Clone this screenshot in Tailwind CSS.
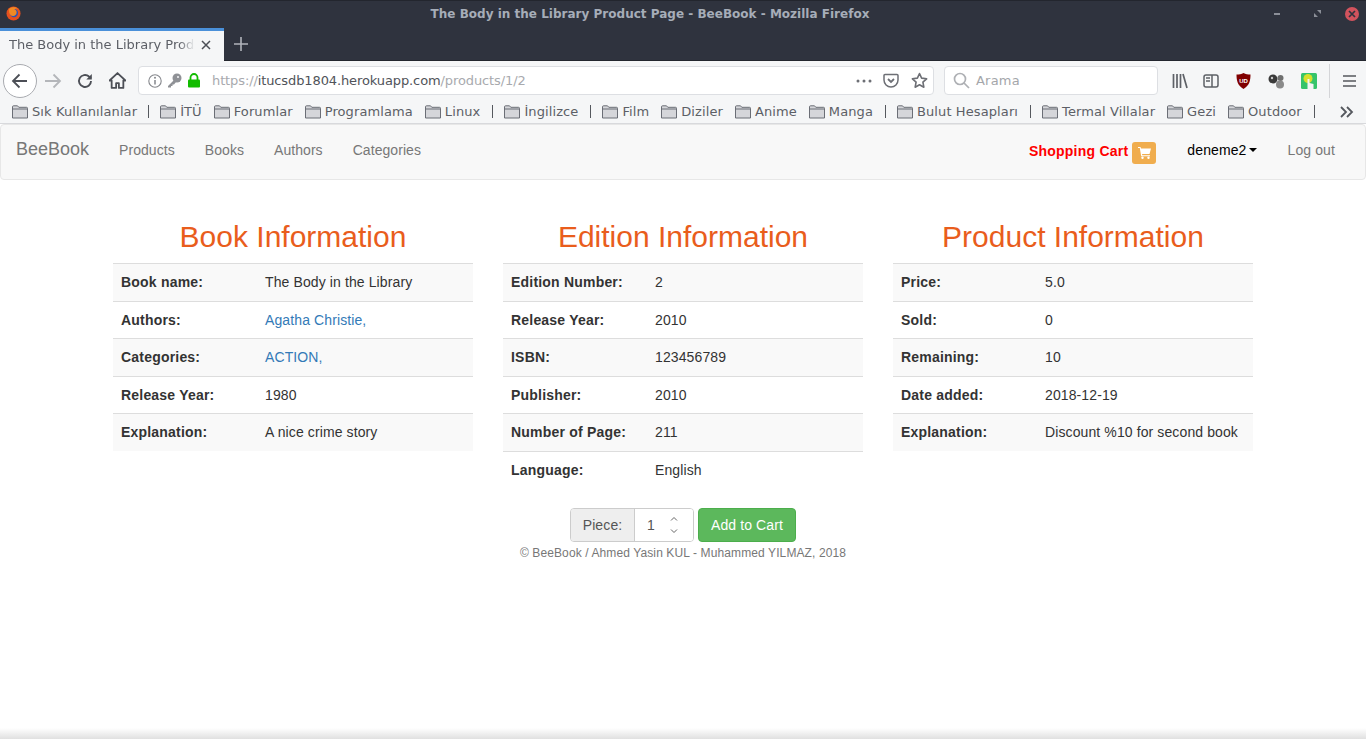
<!DOCTYPE html>
<html lang="en">
<head>
<meta charset="UTF-8">
<title>The Body in the Library Product Page - BeeBook</title>
<script src="https://cdn.jsdelivr.net/npm/@tailwindcss/browser@4"></script>
</head>
<body class="h-[739px] w-[1366px] overflow-hidden bg-white font-['Liberation_Sans',sans-serif]">
<svg width="0" height="0" class="absolute">
  <symbol id="folder" viewBox="0 0 16 16">
    <path d="M.5 14V2.800a1 1 0 0 1 1-1h4l1.300 1.500h7.700a1 1 0 0 1 1 1V14z" fill="#d5d6da" stroke="#6b6e76" stroke-width="1"/>
    <path d="M.5 5h15" stroke="#6b6e76" stroke-width="1" fill="none"/>
  </symbol>
</svg>

<!-- title bar -->
<div class="relative flex h-[28px] items-center border-t border-[#23262e] bg-[#2f333e] pb-[2px]">
  <svg class="ml-[6px] h-[15px] w-[15px]" viewBox="0 0 16 16">
    <circle cx="8" cy="8" r="7.500" fill="#e5501f"/>
    <circle cx="8.500" cy="7.500" r="4.400" fill="#2e55b5"/>
    <path d="M3 3.500C6 .5 11 1 13 3c-2-.6-3-.4-4 .4 2 .6 3 2.600 2 5-1 2-4 3-6 1.500C3.500 8.500 3 6 3 3.500z" fill="#f08a24"/>
  </svg>
  <div class="absolute inset-x-0 pr-[66px] text-center font-['DejaVu_Sans',sans-serif] text-[12px] font-bold tracking-[0.01px] text-[#a6adb8]">The Body in the Library Product Page - BeeBook - Mozilla Firefox</div>
  <div class="ml-auto flex items-center">
    <div class="mr-[34px] h-[2px] w-[6px] bg-[#8b8f98]"></div>
    <svg class="mr-[24px] h-[7px] w-[7px]" viewBox="0 0 7 7"><path d="M0 7V3l4 4zM7 0v4L3 0z" fill="#8b8f98"/></svg>
    <div class="mr-[7px] flex h-[14px] w-[14px] items-center justify-center rounded-full bg-[#d2535d]">
      <svg class="h-[8px] w-[8px]" viewBox="0 0 8 8"><path d="M1 1l6 6M7 1L1 7" stroke="#2f333e" stroke-width="1.700"/></svg>
    </div>
  </div>
</div>

<!-- tab strip -->
<div class="flex h-[33px] items-center border-b border-[#23262e] bg-[#2f333e]">
  <div class="flex h-[33px] w-[224px] items-center border-t-[3px] border-[#4a90d9] bg-[#f5f6f7] pb-[2px] pl-[9px] font-['DejaVu_Sans',sans-serif] text-[13px] text-[#5c5f66]">
    <span class="w-[186px] overflow-hidden whitespace-nowrap [mask-image:linear-gradient(to_right,black_170px,transparent_186px)]">The Body in the Library Product Page</span>
    <svg class="ml-[5px] h-[12px] w-[12px]" viewBox="0 0 12 12"><path d="M2 2l8 8M10 2l-8 8" stroke="#4c4f56" stroke-width="1.500"/></svg>
  </div>
  <svg class="ml-[10px] h-[14px] w-[14px]" viewBox="0 0 14 14"><path d="M7 0v14M0 7h14" stroke="#b1b4bb" stroke-width="1.600"/></svg>
</div>

<!-- nav bar -->
<div class="flex h-[39px] items-center bg-[#f5f6f7] text-[#4c4f56]">
  <div class="ml-[3px] flex h-[34px] w-[34px] items-center justify-center rounded-full border border-[#a9abb0] bg-white">
    <svg class="h-[18px] w-[18px]" viewBox="0 0 18 18" fill="none" stroke="#4c4f56" stroke-width="1.800"><path d="M16 9H2M8.500 2.500L2 9l6.500 6.500"/></svg>
  </div>
  <svg class="ml-[7px] h-[18px] w-[18px]" viewBox="0 0 18 18" fill="none" stroke="#b4b6ba" stroke-width="1.800"><path d="M1 9h15M9.500 2.500L16 9l-6.500 6.500"/></svg>
  <svg class="ml-[15px] h-[16px] w-[16px]" viewBox="0 0 16 16" fill="none" stroke="#4c4f56" stroke-width="1.900"><path d="M14 8a6 6 0 1 1-2-4.500L14 5"/><path d="M14.800 1v5.500H9.300z" fill="#4c4f56" stroke="none"/></svg>
  <svg class="ml-[16px] h-[17px] w-[17px]" viewBox="0 0 16 16"><path d="M8 1L.5 8h2v7h4.200v-4.500h2.600V15h4.200V8h2z" fill="none" stroke="#4c4f56" stroke-width="1.700" stroke-linejoin="round"/></svg>
  <div class="ml-[12px] flex h-[29px] w-[796px] items-center rounded-[4px] border border-[#dddfe3] bg-white pl-[9px]">
    <svg class="h-[14px] w-[14px]" viewBox="0 0 14 14" fill="none"><circle cx="7" cy="7" r="6.200" stroke="#85878c" stroke-width="1.100"/><path d="M7 6v4.500" stroke="#85878c" stroke-width="1.500"/><circle cx="7" cy="3.800" r="1" fill="#85878c"/></svg>
    <svg class="ml-[5px] h-[15px] w-[15px]" viewBox="0 0 15 15"><circle cx="10" cy="5" r="4.500" fill="#8f9196"/><path d="M7 7L1 13v1.500h3V13h1.500v-1.500H7L9 9z" fill="#8f9196"/><circle cx="11" cy="4" r="1" fill="#f5f6f7"/></svg>
    <svg class="ml-[5px] h-[15px] w-[14px]" viewBox="0 0 14 15"><path d="M3.500 7V4.500a3.500 3.500 0 0 1 7 0V7" fill="none" stroke="#12bc00" stroke-width="1.800"/><rect x="1" y="6.500" width="12" height="8" rx="1" fill="#12bc00"/></svg>
    <div class="ml-[11px] pt-px font-['DejaVu_Sans',sans-serif] text-[13px] tracking-[-0.11px] text-[#a8aaae]">https://<span class="text-[#505359]">itucsdb1804.herokuapp.com</span>/products/1/2</div>
    <div class="ml-auto flex items-center">
      <svg class="h-[4px] w-[16px]" viewBox="0 0 16 4" fill="#6d6f75"><circle cx="2" cy="2" r="1.500"/><circle cx="8" cy="2" r="1.500"/><circle cx="14" cy="2" r="1.500"/></svg>
      <svg class="ml-[11px] h-[16px] w-[16px]" viewBox="0 0 16 16" fill="none" stroke="#6d6f75" stroke-width="1.500"><path d="M1 2.500a1 1 0 0 1 1-1h12a1 1 0 0 1 1 1V7a7 7 0 0 1-14 0z"/><path d="M5 6l3 3 3-3" stroke-width="1.800"/></svg>
      <svg class="mr-[5px] ml-[12px] h-[17px] w-[17px]" viewBox="0 0 16 16" fill="none" stroke="#6d6f75" stroke-width="1.500" stroke-linejoin="round"><path d="M8 1.500l2 4.300 4.700.6-3.500 3.200.9 4.700L8 12l-4.100 2.300.9-4.700L1.300 6.400 6 5.800z"/></svg>
    </div>
  </div>
  <div class="ml-[10px] flex h-[29px] w-[214px] items-center rounded-[4px] border border-[#dddfe3] bg-white pl-[8px]">
    <svg class="h-[17px] w-[17px]" viewBox="0 0 17 17" fill="none" stroke="#aeb0b4" stroke-width="1.700"><circle cx="7" cy="7" r="5.500"/><path d="M11 11l5 5"/></svg>
    <span class="ml-[6px] pt-px font-['DejaVu_Sans',sans-serif] text-[13px] tracking-[0.2px] text-[#a4a6aa]">Arama</span>
  </div>
  <svg class="ml-[14px] h-[16px] w-[16px]" viewBox="0 0 16 16" fill="none" stroke="#5e6167" stroke-width="1.700"><path d="M1.500 1v14M5 1v14M8.500 1v14M11 1l4 14"/></svg>
  <svg class="ml-[15px] h-[16px] w-[16px]" viewBox="0 0 16 16" fill="none" stroke="#5e6167" stroke-width="1.500"><rect x="1" y="2" width="14" height="12" rx="2"/><path d="M9 2v12M3 5h4M3 8h4"/></svg>
  <svg class="ml-[17px] h-[16px] w-[15px]" viewBox="0 0 15 16"><path d="M7.500 0c2 1 4.500 1.500 7 1.500 0 6-1 11-7 14.500C1.500 12.500.5 7.500.5 1.500 3 1.500 5.500 1 7.500 0z" fill="#800000"/><text x="7.500" y="10" font-size="6" font-weight="bold" fill="#fff" text-anchor="middle" font-family="Liberation Sans">UD</text></svg>
  <svg class="ml-[17px] h-[16px] w-[17px]" viewBox="0 0 17 16"><circle cx="5" cy="6" r="4.500" fill="#3a3a3a"/><circle cx="12.500" cy="5" r="3" fill="#6f6f6f"/><circle cx="12" cy="11.500" r="4" fill="#8a8a8a"/><circle cx="4" cy="5" r="1.200" fill="#ccc"/></svg>
  <svg class="ml-[16px] h-[16px] w-[16px]" viewBox="0 0 16 16"><rect width="16" height="16" rx="1.500" fill="#35c46a"/><circle cx="7" cy="5.500" r="4.500" fill="#d6e02c"/><path d="M6.500 16V6h2v4l4 1v5z" fill="#f4f4f4"/></svg>
  <div class="ml-[12px] h-[34px] w-px bg-[#d4d5d8]"></div>
  <svg class="ml-[13px] h-[14px] w-[13px]" viewBox="0 0 13 14" stroke="#55585e" stroke-width="1.700"><path d="M0 2h13M0 7h13M0 12h13"/></svg>
</div>

<!-- bookmarks bar -->
<div class="flex h-[24px] items-center border-b border-[#d8d9dc] bg-[#f5f6f7] font-['DejaVu_Sans',sans-serif] text-[13px] tracking-[0.1px] whitespace-nowrap text-[#5c5f66]">
  <svg class="ml-[12px] h-[16px] w-[16px]"><use href="#folder"/></svg><span class="ml-[4px]">Sık Kullanılanlar</span>
  <div class="ml-[11px] h-[13px] w-px bg-[#55585e]"></div>
  <svg class="ml-[11px] h-[16px] w-[16px]"><use href="#folder"/></svg><span class="ml-[4px]">İTÜ</span>
  <svg class="ml-[12px] h-[16px] w-[16px]"><use href="#folder"/></svg><span class="ml-[4px]">Forumlar</span>
  <svg class="ml-[12px] h-[16px] w-[16px]"><use href="#folder"/></svg><span class="ml-[4px]">Programlama</span>
  <svg class="ml-[12px] h-[16px] w-[16px]"><use href="#folder"/></svg><span class="ml-[4px]">Linux</span>
  <div class="ml-[12px] h-[13px] w-px bg-[#55585e]"></div>
  <svg class="ml-[11px] h-[16px] w-[16px]"><use href="#folder"/></svg><span class="ml-[4px]">İngilizce</span>
  <div class="ml-[12px] h-[13px] w-px bg-[#55585e]"></div>
  <svg class="ml-[11px] h-[16px] w-[16px]"><use href="#folder"/></svg><span class="ml-[4px]">Film</span>
  <svg class="ml-[12px] h-[16px] w-[16px]"><use href="#folder"/></svg><span class="ml-[4px]">Diziler</span>
  <svg class="ml-[12px] h-[16px] w-[16px]"><use href="#folder"/></svg><span class="ml-[4px]">Anime</span>
  <svg class="ml-[12px] h-[16px] w-[16px]"><use href="#folder"/></svg><span class="ml-[4px]">Manga</span>
  <div class="ml-[12px] h-[13px] w-px bg-[#55585e]"></div>
  <svg class="ml-[11px] h-[16px] w-[16px]"><use href="#folder"/></svg><span class="ml-[4px]">Bulut Hesapları</span>
  <div class="ml-[12px] h-[13px] w-px bg-[#55585e]"></div>
  <svg class="ml-[11px] h-[16px] w-[16px]"><use href="#folder"/></svg><span class="ml-[4px]">Termal Villalar</span>
  <svg class="ml-[12px] h-[16px] w-[16px]"><use href="#folder"/></svg><span class="ml-[4px]">Gezi</span>
  <svg class="ml-[12px] h-[16px] w-[16px]"><use href="#folder"/></svg><span class="ml-[4px]">Outdoor</span>
  <div class="ml-[12px] h-[13px] w-px bg-[#55585e]"></div>
  <svg class="mr-[12px] ml-auto h-[12px] w-[14px]" viewBox="0 0 14 12" fill="none" stroke="#55585e" stroke-width="1.800"><path d="M1 1l5 5-5 5M7 1l5 5-5 5"/></svg>
</div>

<!-- page -->
<div class="relative h-[615px] text-[14px] tracking-[0.11px] text-[#333333]">
  <div class="flex h-[56px] items-start rounded-[4px] border border-[#e7e7e7] bg-[#f8f8f8] text-[#777777]">
    <span class="mt-[14px] ml-[15px] text-[18px] leading-[20px] tracking-normal">BeeBook</span>
    <span class="mt-[15px] ml-[30px] leading-[20px] tracking-[0.06px]">Products</span>
    <span class="mt-[15px] ml-[30px] leading-[20px] tracking-[0.06px]">Books</span>
    <span class="mt-[15px] ml-[30px] leading-[20px] tracking-[0.06px]">Authors</span>
    <span class="mt-[15px] ml-[30px] leading-[20px] tracking-[0.06px]">Categories</span>
    <div class="ml-auto flex items-start">
      <span class="mt-[16px] leading-[20px] font-bold tracking-[0.23px] text-[#ff0000]">Shopping Cart</span>
      <span class="mt-[17px] ml-[4px] flex h-[22px] w-[24px] items-center justify-center rounded-[3px] bg-[#f0ad4e]">
        <svg class="h-[12px] w-[13px]" viewBox="0 0 13 12" fill="#fff"><path d="M0 0h2.500l.5 1.500h10L11.500 7H4l.3 1.300H12v1H3.200L1.800 1H0z"/><circle cx="4.500" cy="10.800" r="1.200"/><circle cx="10.500" cy="10.800" r="1.200"/></svg>
      </span>
      <span class="mt-[15px] ml-[31px] leading-[20px] text-[#000000]">deneme2</span>
      <span class="mt-[23px] ml-[2px] h-0 w-0 border-x-4 border-t-4 border-x-transparent border-t-black"></span>
      <span class="mt-[15px] mr-[30px] ml-[31px] leading-[20px]">Log out</span>
    </div>
  </div>

  <div class="mt-[37px] flex justify-center gap-[30px] [&_b]:tracking-[0.2px]">
    <div class="w-[360px]">
      <h2 class="pb-[7px] text-center text-[30px] leading-[39px] tracking-normal text-[#e95d1c]">Book Information</h2>
      <div class="flex h-[38px] items-center border-t border-[#dddddd] bg-[#f9f9f9] px-[8px]"><b class="w-[144px]">Book name:</b><span>The Body in the Library</span></div>
      <div class="flex h-[37px] items-center border-t border-[#dddddd] px-[8px]"><b class="w-[144px]">Authors:</b><span class="text-[#337ab7]">Agatha Christie,</span></div>
      <div class="flex h-[38px] items-center border-t border-[#dddddd] bg-[#f9f9f9] px-[8px]"><b class="w-[144px]">Categories:</b><span class="text-[#337ab7]">ACTION,</span></div>
      <div class="flex h-[37px] items-center border-t border-[#dddddd] px-[8px]"><b class="w-[144px]">Release Year:</b><span>1980</span></div>
      <div class="flex h-[38px] items-center border-t border-[#dddddd] bg-[#f9f9f9] px-[8px]"><b class="w-[144px]">Explanation:</b><span>A nice crime story</span></div>
    </div>
    <div class="w-[360px]">
      <h2 class="pb-[7px] text-center text-[30px] leading-[39px] tracking-normal text-[#e95d1c]">Edition Information</h2>
      <div class="flex h-[38px] items-center border-t border-[#dddddd] bg-[#f9f9f9] px-[8px]"><b class="w-[144px]">Edition Number:</b><span>2</span></div>
      <div class="flex h-[37px] items-center border-t border-[#dddddd] px-[8px]"><b class="w-[144px]">Release Year:</b><span>2010</span></div>
      <div class="flex h-[38px] items-center border-t border-[#dddddd] bg-[#f9f9f9] px-[8px]"><b class="w-[144px]">ISBN:</b><span>123456789</span></div>
      <div class="flex h-[37px] items-center border-t border-[#dddddd] px-[8px]"><b class="w-[144px]">Publisher:</b><span>2010</span></div>
      <div class="flex h-[38px] items-center border-t border-[#dddddd] bg-[#f9f9f9] px-[8px]"><b class="w-[144px]">Number of Page:</b><span>211</span></div>
      <div class="flex h-[37px] items-center border-t border-[#dddddd] px-[8px]"><b class="w-[144px]">Language:</b><span>English</span></div>
    </div>
    <div class="w-[360px]">
      <h2 class="pb-[7px] text-center text-[30px] leading-[39px] tracking-normal text-[#e95d1c]">Product Information</h2>
      <div class="flex h-[38px] items-center border-t border-[#dddddd] bg-[#f9f9f9] px-[8px]"><b class="w-[144px]">Price:</b><span>5.0</span></div>
      <div class="flex h-[37px] items-center border-t border-[#dddddd] px-[8px]"><b class="w-[144px]">Sold:</b><span>0</span></div>
      <div class="flex h-[38px] items-center border-t border-[#dddddd] bg-[#f9f9f9] px-[8px]"><b class="w-[144px]">Remaining:</b><span>10</span></div>
      <div class="flex h-[37px] items-center border-t border-[#dddddd] px-[8px]"><b class="w-[144px]">Date added:</b><span>2018-12-19</span></div>
      <div class="flex h-[38px] items-center border-t border-[#dddddd] bg-[#f9f9f9] px-[8px]"><b class="w-[144px]">Explanation:</b><span>Discount %10 for second book</span></div>
    </div>
  </div>

  <div class="mt-[20px] flex justify-center">
    <div class="flex h-[34px] w-[124px] overflow-hidden rounded-[4px] border border-[#cccccc]">
      <div class="flex w-[64px] items-center justify-center border-r border-[#cccccc] bg-[#eeeeee] text-[#555555]">Piece:</div>
      <div class="flex flex-1 items-center bg-white pl-[12px] text-[#555555]">1
        <svg class="ml-[15px] h-[18px] w-[8px]" viewBox="0 0 8 18" fill="none" stroke="#666666" stroke-width="1"><path d="M1 4.500l3-3 3 3M1 13.500l3 3 3-3"/></svg>
      </div>
    </div>
    <div class="ml-[4px] flex h-[34px] w-[98px] items-center justify-center rounded-[4px] border border-[#4cae4c] bg-[#5cb85c] text-white">Add to Cart</div>
  </div>
  <div class="mt-[3px] text-center text-[12px] leading-[17px] text-[#777777]">© BeeBook / Ahmed Yasin KUL - Muhammed YILMAZ, 2018</div>

  <div class="absolute inset-x-0 bottom-0 h-[11px] bg-gradient-to-b from-transparent to-[#e0e0e0]"></div>
</div>
</body>
</html>
